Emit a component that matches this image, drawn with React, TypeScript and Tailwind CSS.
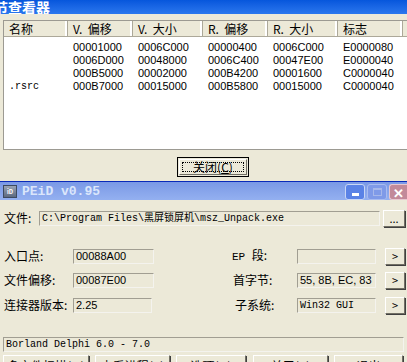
const cols = [
  { title: '名称', w: 'w-[64px]' },
  { title: 'V.  偏移', w: 'w-[65px]' },
  { title: 'V.  大小', w: 'w-[70px]' },
  { title: 'R.  偏移', w: 'w-[65px]' },
  { title: 'R.  大小', w: 'w-[70px]' },
  { title: '标志', w: 'w-[65px]' },
];

const rows = [
  ['', '00001000', '0006C000', '00000400', '0006C000', 'E0000080'],
  ['', '0006D000', '00048000', '0006C400', '00047E00', 'E0000040'],
  ['', '000B5000', '00002000', '000B4200', '00001600', 'C0000040'],
  ['.rsrc', '000B7000', '00015000', '000B5800', '00015000', 'C0000040'],
];

function Field({ value, mono, className }: { value: string; mono?: boolean; className: string }) {
  return (
    <div
      className={`h-[15px] flex items-center border border-t-[#a19e92] border-l-[#a19e92] border-b-[#f4f3ee] border-r-[#f4f3ee] bg-[#ece9d8] overflow-hidden whitespace-nowrap ${className} ${
        mono
          ? "pl-[2px] font-['Liberation_Mono','Noto_Sans_CJK_SC',monospace] text-[10px]"
          : "pl-[2px] font-['Liberation_Sans','Noto_Sans_CJK_SC',sans-serif] text-[11px]"
      }`}
    >
      {value}
    </div>
  );
}

function SmallButton({ label, className }: { label: string; className: string }) {
  return (
    <div className={`h-[17px] flex items-center justify-center bg-[#ece9d8] border border-t-white border-l-white border-b-[#716f64] border-r-[#716f64] shadow-[1px_1px_0_#404040] text-[11px] leading-none ${className}`}>
      {label}
    </div>
  );
}

function WinButton({ label, className }: { label: string; className: string }) {
  return (
    <div className={`h-[22px] flex items-center justify-center bg-[#ece9d8] border border-t-white border-l-white border-b-[#716f64] border-r-[#716f64] shadow-[1px_1px_0_#404040] text-[12px] leading-none whitespace-nowrap ${className}`}>
      {label}
    </div>
  );
}

export default function App() {
  return (
    <div className="w-[407px] h-[362px] overflow-hidden bg-[#ece9d8] flex flex-col font-['Noto_Sans_CJK_SC',sans-serif] text-[12px] text-black">
      {/* section viewer window */}
      <div className="h-[181px] shrink-0 flex flex-col">
        <div className="h-[14px] shrink-0 bg-gradient-to-b from-[#0656dc] to-[#2a77ee] flex items-center overflow-hidden">
          <span className="ml-[-6px] text-white font-bold text-[14px] leading-[14px] whitespace-nowrap">节查看器</span>
        </div>
        <div className="pl-[3px] pt-[6px]">
          <div className="w-[412px] h-[130px] border border-[#9c9a92] border-r-0 bg-white overflow-hidden">
            <div className="flex h-[16px] bg-[#ece9d8] border-b border-[#aca899]">
              {cols.map((c) => (
                <div
                  key={c.title}
                  className={`${c.w} shrink-0 pl-[5px] flex items-center border-r border-[#aca899] shadow-[inset_-2px_0_0_#fff] text-[12px] leading-none whitespace-pre`}
                >
                  {c.title}
                </div>
              ))}
              <div className="flex-1" />
            </div>
            <div className="pt-[4px] font-['Liberation_Sans',sans-serif] text-[11px]">
              {rows.map((r, i) => (
                <div key={i} className="flex h-[13px] items-center">
                  {r.map((v, j) => (
                    <div key={j} className={`${cols[j].w} shrink-0 pl-[5px] leading-[13px] whitespace-nowrap ${j === 0 ? "font-['Liberation_Mono',monospace] text-[10px]" : ''}`}>
                      {v}
                    </div>
                  ))}
                </div>
              ))}
            </div>
          </div>
        </div>
        <div className="pl-[177px] pt-[7px]">
          <div className="w-[72px] h-[20px] border border-black bg-[#ece9d8] p-[1px]">
            <div className="w-full h-full border border-t-white border-l-white border-b-[#716f64] border-r-[#716f64] p-[2px]">
              <div className="w-full h-full border border-dotted border-black flex items-center justify-center text-[12px] leading-none">
                关闭(<span className="underline">C</span>)
              </div>
            </div>
          </div>
        </div>
      </div>

      {/* PEiD window */}
      <div className="h-[19px] shrink-0 flex flex-col">
        <div className="h-[2px] bg-[#0a2ab8]" />
        <div className="flex-1 bg-gradient-to-b from-[#7a99e6] to-[#94b0f0] flex items-center">
          <div className="ml-[3px] w-[14px] h-[13px] bg-gradient-to-b from-[#9aa4b4] to-[#5d6a80] border border-[#3d4a60] text-[6px] leading-[11px] text-white font-bold text-center overflow-hidden">
            iD
          </div>
          <span className="ml-[5px] font-['Liberation_Mono',monospace] font-bold text-[13px] leading-none text-[#dbe6fb] whitespace-pre">
            PEiD v0.95
          </span>
          <div className="flex-1" />
          <div className="w-[20px] h-[16px] mt-[2px] rounded-[3px] bg-[#5a82e6] border border-[#c8d6f6] flex items-end justify-center pb-[3px]">
            <div className="w-[7px] h-[3px] bg-white" />
          </div>
          <div className="ml-[2px] w-[20px] h-[16px] mt-[2px] rounded-[3px] bg-[#7f9ae8] border border-[#a9bcf0] flex items-center justify-center">
            <div className="w-[9px] h-[8px] border border-[#a7b8ea] border-t-2" />
          </div>
          <div className="ml-[2px] w-[18px] h-[16px] mt-[2px] rounded-l-[3px] bg-[#c28a9a] border border-[#e8c8d0] border-r-0 flex items-center justify-center text-white font-bold text-[13px] leading-none">
            ✕
          </div>
        </div>
      </div>

      <div className="flex flex-col pt-[10px]">
        <div className="flex items-center h-[16px]">
          <span className="ml-[4px] w-[35px] leading-none whitespace-nowrap">文件:</span>
          <Field value="C:\Program Files\黑屏锁屏机\msz_Unpack.exe" mono className="w-[341px]" />
          <SmallButton label="..." className="ml-[3px] w-[22px]" />
        </div>

        <div className="flex items-center h-[16px] mt-[22px]">
          <span className="ml-[4px] w-[69px] leading-none whitespace-nowrap">入口点:</span>
          <Field value="00088A00" className="w-[81px]" />
          <span className="ml-[78px] w-[65px] leading-none whitespace-nowrap">
            <span className="font-['Liberation_Mono',monospace] text-[11px]">EP </span>段:
          </span>
          <Field value="" className="w-[79px]" />
          <SmallButton label=">" className="ml-[9px] w-[20px]" />
        </div>

        <div className="flex items-center h-[16px] mt-[8px]">
          <span className="ml-[4px] w-[69px] leading-none whitespace-nowrap">文件偏移:</span>
          <Field value="00087E00" className="w-[81px]" />
          <span className="ml-[79px] w-[64px] leading-none whitespace-nowrap">首字节:</span>
          <Field value="55, 8B, EC, 83" className="w-[79px]" />
          <SmallButton label=">" className="ml-[9px] w-[20px]" />
        </div>

        <div className="flex items-center h-[16px] mt-[9px]">
          <span className="ml-[4px] w-[69px] leading-none whitespace-nowrap">连接器版本:</span>
          <Field value="2.25" className="w-[79px]" />
          <span className="ml-[83px] w-[62px] leading-none whitespace-nowrap">子系统:</span>
          <Field value="Win32 GUI" mono className="w-[79px]" />
          <SmallButton label=">" className="ml-[9px] w-[20px]" />
        </div>

        <div className="mt-[24px] ml-[3px]">
          <Field value="Borland Delphi 6.0 - 7.0" mono className="w-[401px]" />
        </div>

        <div className="flex mt-[3px] pl-[3px]">
          <WinButton label="多文件扫描(M)" className="w-[86px]" />
          <WinButton label="查看进程(P)" className="ml-[6px] w-[75px]" />
          <WinButton label="选项(O)" className="ml-[6px] w-[70px]" />
          <WinButton label="关于(A)" className="ml-[7px] w-[75px]" />
          <WinButton label="退出" className="ml-[6px] w-[69px]" />
        </div>
      </div>
    </div>
  );
}
